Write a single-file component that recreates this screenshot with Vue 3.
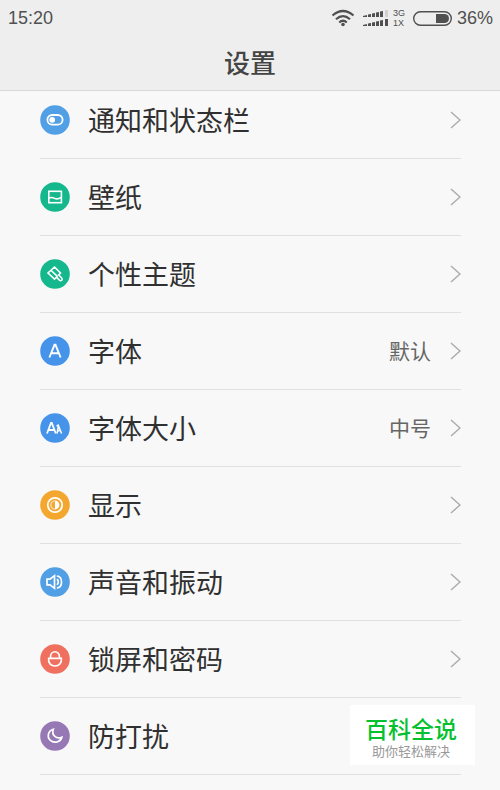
<script setup>
const items = [
  { id: "notice", label: "通知和状态栏" },
  { id: "wallpaper", label: "壁纸" },
  { id: "theme", label: "个性主题" },
  { id: "font", label: "字体", value: "默认" },
  { id: "size", label: "字体大小", value: "中号" },
  { id: "display", label: "显示" },
  { id: "sound", label: "声音和振动" },
  { id: "lock", label: "锁屏和密码" },
  { id: "dnd", label: "防打扰" }
];
</script>

<template>
  <div class="page">
    <header class="top">
      <div class="status">
        <span class="time">15:20</span>
        <svg class="wifi" width="24" height="18" viewBox="0 0 24 18">
          <g fill="none" stroke="#505050" stroke-width="2.2">
            <path d="M1.5 6.500Q12-2.500 22.500 6.500" />
            <path d="M5 10.200Q12 4 19 10.200" />
            <path d="M8.200 13.500Q12 10 15.800 13.500" />
          </g>
          <circle cx="12" cy="15.500" r="1.800" fill="#505050" />
        </svg>
        <div class="signal">
          <svg width="26" height="17" viewBox="0 0 26 17" fill="#505050">
            <path d="M0 6l4-1v2H0zM5 4.500l3-.5v3H5zM9 3.500l3-.5v4H9zM13 2.500l3-.5v5h-3zM17 1.500l3-.5v6h-3z" />
            <path d="M22 0h3v7h-3z" fill="#d2d2d2" />
            <path d="M0 15l4-1v2H0zM5 13.500l3-.5v3H5zM9 12.500l3-.5v4H9zM13 11.500l3-.5v5h-3zM17 10.500l3-.5v6h-3zM22 9h3v7h-3z" />
          </svg>
          <div class="nets">
            <span>3G</span>
            <span>1X</span>
          </div>
        </div>
        <svg class="battery" width="39" height="15" viewBox="0 0 39 15">
          <rect x=".7" y=".7" width="37.600" height="13.600" rx="6.800" fill="none" stroke="#505050" stroke-width="1.400" />
          <path d="M23 3h8.500a4.500 4.500 0 0 1 0 9H23z" fill="#505050" />
        </svg>
        <span class="percent">36%</span>
      </div>
      <h1>设置</h1>
    </header>

    <ul class="list">
      <li v-for="item in items" :key="item.id">
        <button class="row" type="button">
          <svg :class="['icon', item.id]" viewBox="0 0 30 30" aria-hidden="true">
            <circle class="disc" cx="15" cy="15" r="14.800" />
            <g v-if="item.id === 'notice'">
              <rect x="7.400" y="10" width="15.200" height="9.600" rx="4.800" stroke-width="1.800" />
              <circle cx="12.200" cy="14.800" r="2.900" class="solid" />
            </g>
            <g v-else-if="item.id === 'wallpaper'">
              <rect x="8.800" y="9.300" width="12.600" height="11.400" />
              <path d="M9 16.400c2-1.600 3.600-1 5.600 0s4.400.4 6.800-1" />
            </g>
            <g v-else-if="item.id === 'theme'">
              <path d="M14.500 8l6 6-1.800 2 3 3a1.500 1.500 0 0 1-2.200 2.200l-3-3-2 2L8 14zM11.200 11.500l6.500 6.200" />
            </g>
            <g v-else-if="item.id === 'font'">
              <path d="M9.400 21.500L14.500 8.800h1l5.100 12.700M11.300 17.300h7.400" stroke-width="1.900" />
            </g>
            <g v-else-if="item.id === 'size'">
              <path d="M7 20.500L11 10h.8l4 10.500M8.500 17h5.800" stroke-width="1.800" />
              <path d="M16.500 13.200l1.700-1 3.400 8.300M17 18.400l3.500-1M18.500 13l-1.500 7.500" stroke-width="1.500" />
            </g>
            <g v-else-if="item.id === 'display'">
              <circle cx="15" cy="15" r="7.200" stroke-width="1.700" />
              <path d="M15 10.600a4.400 4.400 0 0 1 0 8.800z" class="solid" />
              <path d="M15 10.800a4.200 4.200 0 0 0 0 8.400" stroke-width=".8" />
            </g>
            <g v-else-if="item.id === 'sound'">
              <path d="M7 12.200h3L14.500 8.700v12.600L10 17.800H7z" stroke-width="1.700" />
              <path d="M16.800 12.300c2 1 2 4.400 0 5.400M16.800 9c6.300.6 6.300 11.400 0 12" stroke-width="1.700" />
            </g>
            <g v-else-if="item.id === 'lock'">
              <path d="M8.600 14.400h12.800c.6 4.400-2.400 7.600-6.400 7.600s-7-3.200-6.400-7.600zM10.600 14.200v-2a4.400 4.400 0 0 1 8.800 0v2" />
            </g>
            <g v-else>
              <path d="M13.300 8.200c-5.800 1.600-6.700 8.800-2 11.800 4 2.600 9.500.6 10.500-3.800-5.200 2.500-10.500-2-8.500-8z" stroke-width="1.700" />
            </g>
          </svg>
          <span class="label">{{ item.label }}</span>
          <span v-if="item.value" class="value">{{ item.value }}</span>
          <svg class="arrow" width="11" height="18" viewBox="0 0 11 18" aria-hidden="true">
            <path d="M1 1l9 8-9 8" />
          </svg>
        </button>
      </li>
    </ul>

    <aside class="brand">
      <strong>百科全说</strong>
      <span>助你轻松解决</span>
    </aside>
  </div>
</template>

<style>
body {
  background: #f8f8f8;
}
</style>

<style scoped>
.page {
  position: relative;
  min-height: 100vh;
  background: #f8f8f8;
  color: #303030;
  font-family: Roboto, "Noto Sans CJK SC", sans-serif;
}

.top {
  position: sticky;
  top: 0;
  z-index: 1;
  background: #eee;
  border-bottom: 1px solid #d8d8d8;
}

.status {
  display: flex;
  align-items: center;
  height: 36px;
  padding: 0 8px;
  color: #505050;
  font-family: "Liberation Sans", sans-serif;
  font-size: 18px;
}

.time {
  margin-right: auto;
}

.signal {
  display: flex;
  align-items: center;
  gap: 4px;
  margin: 0 8px;
}

.nets {
  display: flex;
  flex-direction: column;
  font-size: 9px;
  line-height: 10px;
}

.battery {
  margin-right: 5px;
}

.percent {
  margin-right: -1px;
}

h1 {
  margin: 0;
  padding-top: 2px;
  color: #444;
  font-size: 26px;
  font-weight: 500;
  line-height: 52px;
  text-align: center;
}

.list {
  margin: -9px 0 0;
  padding: 0 39px 0 40px;
  list-style: none;
}

.row {
  display: flex;
  align-items: center;
  width: 100%;
  height: 77px;
  padding: 0;
  border: 0;
  border-bottom: 1px solid #e0e0e0;
  background: none;
  color: inherit;
  font: inherit;
  text-align: left;
}

.icon {
  flex: none;
  width: 30px;
  height: 30px;
  margin-right: 18px;
  fill: none;
  stroke: #fff;
  stroke-width: 1.6;
}

.disc {
  stroke: none;
}

.solid {
  fill: #fff;
  stroke: none;
}

.notice .disc,
.sound .disc {
  fill: #519fe4;
}

.wallpaper .disc,
.theme .disc {
  fill: #14b88c;
}

.font .disc,
.size .disc {
  fill: #4594ea;
}

.display .disc {
  fill: #f4a72f;
}

.lock .disc {
  fill: #f07060;
}

.dnd .disc {
  fill: #9678b4;
}

.label {
  flex: 1;
  padding-bottom: 2px;
  font-size: 27px;
}

.value {
  margin-right: 19px;
  padding-bottom: 2px;
  color: #666;
  font-size: 21px;
}

.arrow {
  fill: none;
  stroke: #aaa;
  stroke-width: 1.4;
}

.brand {
  position: fixed;
  right: 25px;
  bottom: 25px;
  z-index: 2;
  display: flex;
  flex-direction: column;
  align-items: center;
  box-sizing: border-box;
  width: 125px;
  height: 60px;
  padding: 13px 3px 0 0;
  background: #fff;
}

.brand strong {
  color: #06c12f;
  font-size: 23px;
  font-weight: 500;
  line-height: 26px;
}

.brand span {
  color: #999;
  font-size: 13px;
  line-height: 16px;
}
</style>
